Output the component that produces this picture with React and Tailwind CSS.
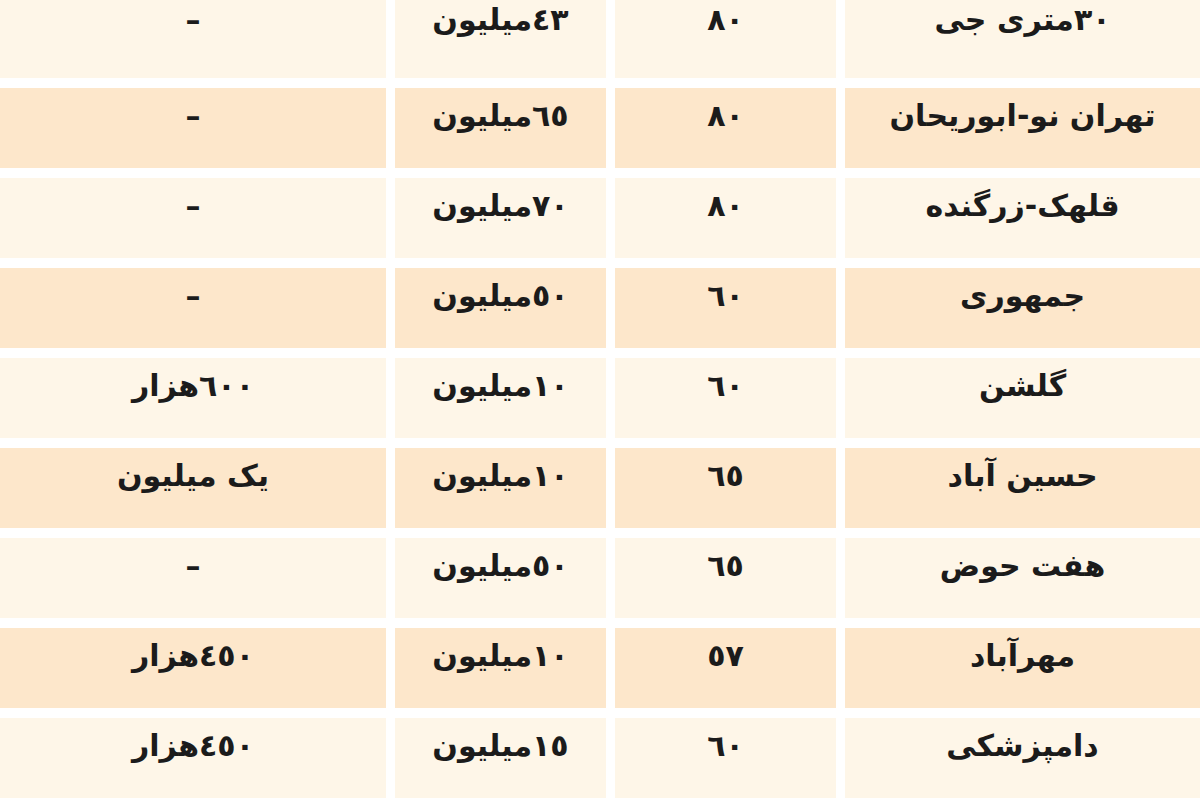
import React from 'react'

const rows = [
  ['٣٠متری جی', '٨٠', '٤٣میلیون', '–'],
  ['تهران نو-ابوریحان', '٨٠', '٦٥میلیون', '–'],
  ['قلهک-زرگنده', '٨٠', '٧٠میلیون', '–'],
  ['جمهوری', '٦٠', '٥٠میلیون', '–'],
  ['گلشن', '٦٠', '١٠میلیون', '٦٠٠هزار'],
  ['حسین آباد', '٦٥', '١٠میلیون', 'یک میلیون'],
  ['هفت حوض', '٦٥', '٥٠میلیون', '–'],
  ['مهرآباد', '٥٧', '١٠میلیون', '٤٥٠هزار'],
  ['دامپزشکی', '٦٠', '١٥میلیون', '٤٥٠هزار'],
]

export default function App() {
  return (
    <div
      dir="rtl"
      className="w-[1200px] h-[800px] overflow-hidden bg-white"
      style={{ fontFamily: '"DejaVu Sans", sans-serif' }}
    >
      <div className="grid grid-cols-[355px_221px_211px_1fr] gap-x-[9px] gap-y-[10px]">
        {rows.map((row, i) => {
          const peach = i % 2 === 1
          return row.map((cell, j) => (
            <div
              key={i + '-' + j}
              className={
                (i === 0 ? 'h-[78px] pt-0 ' : 'h-[80px] pt-[8px] ') +
                (peach ? 'bg-[#fde7cb] ' : 'bg-[#fef6e8] ') +
                'flex justify-center text-[30px] font-bold leading-[40px] text-[#1b1b1b]'
              }
            >
              {cell}
            </div>
          ))
        })}
      </div>
    </div>
  )
}
